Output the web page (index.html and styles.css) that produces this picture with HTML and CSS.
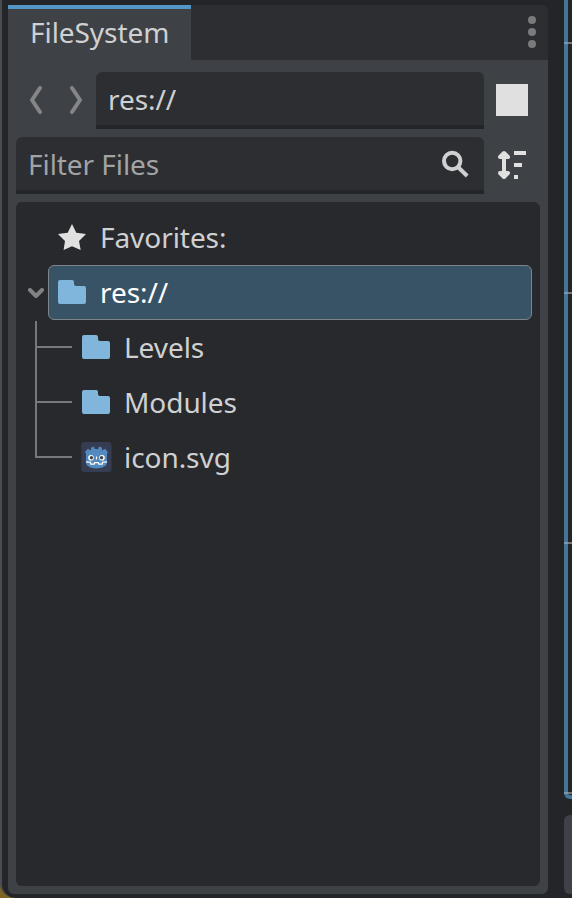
FILE: index.html
```html
<!DOCTYPE html>
<html lang="en">
<head>
<meta charset="utf-8">
<title>FileSystem</title>
<link rel="stylesheet" href="styles.css">
</head>
<body>
<div class="window">
  <section class="dock">
    <header class="tabs">
      <div class="tab">FileSystem</div>
      <svg class="dots" width="8" height="32" viewBox="0 0 8 32"><circle cx="4" cy="4" r="4"/><circle cx="4" cy="16" r="4"/><circle cx="4" cy="28" r="4"/></svg>
    </header>
    <div class="content">
      <div class="toolbar">
        <svg class="nav" width="80" height="32" viewBox="0 0 80 32"><path d="M24 4 16 16l8 12M56 4l8 12-8 12"/></svg>
        <div class="field path">res://</div>
        <div class="side"><span class="stop"></span></div>
      </div>
      <div class="toolbar">
        <div class="field filter"><span>Filter Files</span>
          <svg class="search" width="32" height="32" viewBox="0 0 32 32"><circle cx="12.2" cy="13" r="8.2"/><path d="m18 19 9.2 9"/></svg>
        </div>
        <div class="side">
          <svg width="32" height="32" viewBox="0 0 32 32"><path class="arrow" d="M8 6v20M8 4l4 4H4zM8 28l4-4H4z"/><path fill="#e0e0e0" d="M18 2h12v4H18zM18 14h8v4h-8zM18 26h4v4h-4z"/></svg>
        </div>
      </div>
      <div class="tree">
        <div class="row root">
          <svg class="icon" width="32" height="32" viewBox="0 0 32 32"><path fill="#e0e0e0" d="m16 3 4.3 8.8 9.7 1.2-7 7 1.7 9L16 25.3 7.6 29l1.4-9-7-7 9.7-1.2z"/></svg>
          <span>Favorites:</span>
        </div>
        <div class="branch">
          <svg class="fold" width="16" height="10" viewBox="0 0 16 10"><path d="m2 2 6 6 6-6"/></svg>
          <div class="row selected">
            <svg class="icon" width="32" height="32" viewBox="0 0 32 32"><use href="#folder"/></svg>
            <span>res://</span>
          </div>
        </div>
        <div class="children">
          <div class="guide"><i></i><i></i><i></i></div>
          <div class="items">
            <div class="row"><svg class="icon" width="32" height="32" viewBox="0 0 32 32"><path id="folder" fill="#80b6dc" d="M4 4h12q2 0 2 2v2q0 2 2 2h8q2 0 2 2v14q0 2-2 2H4q-2 0-2-2V6q0-2 2-2z"/></svg><span>Levels</span></div>
            <div class="row"><svg class="icon" width="32" height="32" viewBox="0 0 32 32"><use href="#folder"/></svg><span>Modules</span></div>
            <div class="row"><svg class="icon" width="32" height="32" viewBox="0 0 32 32">
              <rect x="1.3" y="1" width="30.2" height="30" rx="3" fill="#363d52"/>
              <path fill="#5289be" d="M11 6.5 14 5.5l.8 2.5h3.4l.8-2.5 3 1v3l3-1.8 2.8 3.3-.8 1.8v8.5c0 4-5 6.2-10.5 6.2S6 25.3 6 21.3v-8.5L5 11l2.8-3.3 3.2 1.8z"/>
              <circle cx="11" cy="16.7" r="2.8" fill="#fff"/><circle cx="22" cy="16.7" r="2.8" fill="#fff"/>
              <circle cx="11.4" cy="16.7" r="1.7" fill="#414042"/><circle cx="21.6" cy="16.7" r="1.7" fill="#414042"/>
              <path fill="none" stroke="#fff" stroke-width="1.2" d="M16.5 15.5v3M6 20.8l4.5.4.3 2h3.4l.4-1.5h3.8l.4 1.5h3.4l.3-2 4.5-.4"/>
            </svg><span>icon.svg</span></div>
          </div>
        </div>
      </div>
    </div>
  </section>
  <aside class="neighbor">
    <div class="viewport"><i></i><i></i><i></i><i></i></div>
    <div class="bottom-panel"></div>
  </aside>
</div>
</body>
</html>
```

FILE: styles.css
```css
* { box-sizing: border-box; }
body {
  margin: 0;
  height: 898px;
  overflow: hidden;
  background: #7d6423;
  color: #cfd0d1;
  font: 28px/36px "Noto Sans", sans-serif;
  letter-spacing: -0.06px;
}
svg { display: block; flex: none; }
.window {
  display: flex;
  justify-content: space-between;
  height: 898px;
  padding: 5px 0 4px 6px;
  border-left: 2px solid #4b4c50;
  border-bottom-left-radius: 16px 14px;
  background: #242529;
}
.dock {
  display: flex;
  flex-direction: column;
  width: 540px;
  border-radius: 0 8px 6px 6px;
  background: #3e4145;
  overflow: hidden;
}
.tabs {
  display: flex;
  align-items: stretch;
  justify-content: space-between;
  height: 55px;
  background: #2d2e32;
}
.tab {
  width: 183px;
  padding: 5px 0 0 22px;
  border-top: 4px solid #5495c6;
  background: #3e4145;
}
.dots { margin: 11px 12px 0 0; fill: #7a7b7d; }
.content {
  display: flex;
  flex: 1;
  flex-direction: column;
  gap: 8px;
  padding: 12px 8px 8px;
}
.toolbar { display: flex; height: 57px; }
.nav { margin-top: 12px; fill: none; stroke: #858688; stroke-width: 4; stroke-linecap: round; stroke-linejoin: round; }
.field {
  display: flex;
  flex: 1;
  justify-content: space-between;
  padding: 9px 12px 0;
  border-bottom: 4px solid #242529;
  border-radius: 6px 6px 0 0;
  background: #2d2e32;
}
.filter { color: #a2a3a5; }
.search { margin: 2px 0 0; fill: none; stroke: #cfd0d1; stroke-width: 4; }
.side { width: 56px; padding: 12px; }
.stop { display: block; width: 32px; height: 32px; background: #e0e0e0; }
.arrow { fill: #e0e0e0; stroke: #e0e0e0; stroke-width: 4; stroke-linecap: round; stroke-linejoin: round; }
.tree {
  flex: 1;
  padding: 8px;
  border-radius: 6px;
  background: #28292d;
}
.row { display: flex; height: 55px; gap: 12px; padding-top: 9px; }
.icon { margin-top: 2px; }
.root { padding-left: 32px; }
.branch { display: flex; }
.fold { margin: 23px 4px 0; fill: none; stroke: #818284; stroke-width: 4; stroke-linecap: round; stroke-linejoin: round; }
.selected {
  flex: 1;
  padding: 8px 7px 0;
  border: 1px solid #7d858b;
  border-radius: 6px;
  background: #385366;
  color: #fff;
}
.children { display: flex; }
.guide { width: 37px; height: 137px; margin: 1px 8px 0 11px; border-left: 2px solid #77787a; }
.guide i { display: block; height: 55px; border-bottom: 2px solid #77787a; }
.guide i:first-child { height: 27px; }
.neighbor { display: flex; flex-direction: column; justify-content: space-between; width: 8px; margin-top: -5px; }
.viewport {
  height: 799px;
  padding-top: 42px;
  border-left: 4px solid #437596;
  border-bottom: 4px solid #437596;
  border-bottom-left-radius: 6px;
}
.viewport i { display: block; width: 8px; height: 2px; margin: 0 0 248px -4px; background: linear-gradient(90deg, #7799af 4px, #77787b 4px); }
.bottom-panel { height: 79px; border-radius: 6px 0 0 6px; background: #3e4145; }
```
